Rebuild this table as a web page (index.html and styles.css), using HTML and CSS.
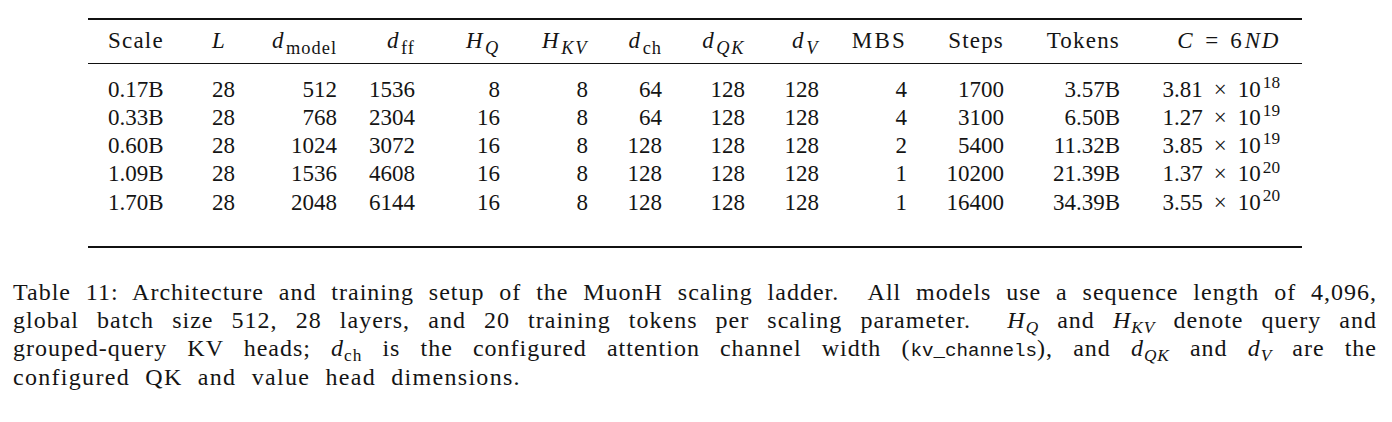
FILE: index.html
```html
<!DOCTYPE html>
<html>
<head>
<meta charset="utf-8">
<link rel="stylesheet" href="styles.css">
</head>
<body>
<figure class="fig">
  <table class="tbl">
    <colgroup>
      <col class="w1"><col class="w2"><col class="w3"><col class="w4"><col class="w5"><col class="w6"><col class="w7"><col class="w8"><col class="w9"><col class="w10"><col class="w11"><col class="w12"><col class="w13">
    </colgroup>
    <thead>
      <tr>
        <th class="first l">Scale</th>
        <th class="l"><i>L</i></th>
        <th><i>d</i><sub>model</sub></th>
        <th><i>d</i><sub>ff</sub></th>
        <th><i>H</i><sub><i>Q</i></sub></th>
        <th><i>H</i><sub><i>KV</i></sub></th>
        <th><i>d</i><sub>ch</sub></th>
        <th><i>d</i><sub><i>QK</i></sub></th>
        <th><i>d</i><sub><i>V</i></sub></th>
        <th class="wide">MBS</th>
        <th>Steps</th>
        <th>Tokens</th>
        <th class="last"><i>C</i><span class="op">=</span><span class="nd">6<i>ND</i></span></th>
      </tr>
    </thead>
    <tbody>
      <tr>
        <td class="first l">0.17B</td><td class="l">28</td><td>512</td><td>1536</td><td>8</td><td>8</td><td>64</td><td>128</td><td>128</td><td>4</td><td>1700</td><td>3.57B</td><td class="last">3.81<span class="op">×</span>10<sup>18</sup></td>
      </tr>
      <tr>
        <td class="first l">0.33B</td><td class="l">28</td><td>768</td><td>2304</td><td>16</td><td>8</td><td>64</td><td>128</td><td>128</td><td>4</td><td>3100</td><td>6.50B</td><td class="last">1.27<span class="op">×</span>10<sup>19</sup></td>
      </tr>
      <tr>
        <td class="first l">0.60B</td><td class="l">28</td><td>1024</td><td>3072</td><td>16</td><td>8</td><td>128</td><td>128</td><td>128</td><td>2</td><td>5400</td><td>11.32B</td><td class="last">3.85<span class="op">×</span>10<sup>19</sup></td>
      </tr>
      <tr>
        <td class="first l">1.09B</td><td class="l">28</td><td>1536</td><td>4608</td><td>16</td><td>8</td><td>128</td><td>128</td><td>128</td><td>1</td><td>10200</td><td>21.39B</td><td class="last">1.37<span class="op">×</span>10<sup>20</sup></td>
      </tr>
      <tr>
        <td class="first l">1.70B</td><td class="l">28</td><td>2048</td><td>6144</td><td>16</td><td>8</td><td>128</td><td>128</td><td>128</td><td>1</td><td>16400</td><td>34.39B</td><td class="last">3.55<span class="op">×</span>10<sup>20</sup></td>
      </tr>
    </tbody>
  </table>
  <figcaption class="cap">
    <span class="ln">Table 11: Architecture and training setup of the MuonH scaling ladder.&nbsp; All models use a sequence length of 4,096,</span>
    <span class="ln">global batch size 512, 28 layers, and 20 training tokens per scaling parameter.&nbsp; <i>H</i><sub><i>Q</i></sub> and <i>H</i><sub><i>KV</i></sub> denote query and</span>
    <span class="ln">grouped-query KV heads; <i>d</i><sub>ch</sub> is the configured attention channel width (<code>kv_channels</code>), and <i>d</i><sub><i>QK</i></sub> and <i>d</i><sub><i>V</i></sub> are the</span>
    <span class="ln end">configured QK and value head dimensions.</span>
  </figcaption>
</figure>
</body>
</html>
```

FILE: styles.css
```css
html, body {
  margin: 0;
  padding: 0;
  background: #ffffff;
}

body {
  font-family: "Liberation Serif", "Times New Roman", serif;
  color: #141414;
  width: 1392px;
  height: 422px;
  overflow: hidden;
}

.fig {
  margin: 0;
  padding-top: 18px;
}

.tbl {
  margin-left: 88px;
  width: 1214px;
  table-layout: fixed;
  border-collapse: separate;
  border-spacing: 0;
  font-size: 23px;
}

.w1 { width: 124px; }
.w2 { width: 38px; }
.w3 { width: 87px; }
.w4 { width: 78px; }
.w5 { width: 85px; }
.w6 { width: 88px; }
.w7 { width: 74px; }
.w8 { width: 83px; }
.w9 { width: 74px; }
.w10 { width: 88px; }
.w11 { width: 97px; }
.w12 { width: 116px; }
.w13 { width: 182px; }

.tbl th,
.tbl td {
  padding: 0;
  text-align: right;
  font-weight: normal;
  white-space: nowrap;
  line-height: 28px;
}

.tbl .l { text-align: left; }
.tbl .first { padding-left: 20px; }
.tbl .last { padding-right: 22px; }

.tbl th {
  border-top: 2px solid #111111;
  border-bottom: 1px solid #111111;
  padding-top: 7px;
  padding-bottom: 8px;
  letter-spacing: 1.2px;
}

.tbl th.wide {
  letter-spacing: 2.2px;
}

.tbl th i {
  letter-spacing: 1.6px;
}

.tbl th sub {
  font-size: 0.8em;
  margin-left: 1px;
  letter-spacing: 1px;
}

.tbl td {
  line-height: 28.25px;
}

.tbl tbody tr:first-child td {
  padding-top: 11.5px;
}

.tbl tbody tr:last-child td {
  padding-bottom: 29.25px;
  border-bottom: 2px solid #111111;
}

.op {
  display: inline-block;
  margin: 0 11px;
}

.nd {
  letter-spacing: 3px;
}

sub {
  font-size: 0.72em;
  line-height: 0;
  vertical-align: -0.3em;
}

sup {
  font-size: 0.75em;
  line-height: 0;
  vertical-align: 0.5em;
  margin-left: 2px;
}

i {
  font-style: italic;
}

.cap {
  margin: 29.75px 0 0 13px;
  width: 1364px;
  font-size: 24px;
  line-height: 28.3px;
  letter-spacing: 1px;
  word-spacing: 1.5px;
}

.ln {
  display: block;
  text-align: justify;
  text-align-last: justify;
}

.ln.end {
  text-align: left;
  text-align-last: left;
  letter-spacing: 1.3px;
  word-spacing: 8px;
}

code {
  font-family: "Liberation Mono", "Courier New", monospace;
  font-size: 0.8em;
  line-height: 0;
  letter-spacing: 0;
}
```
